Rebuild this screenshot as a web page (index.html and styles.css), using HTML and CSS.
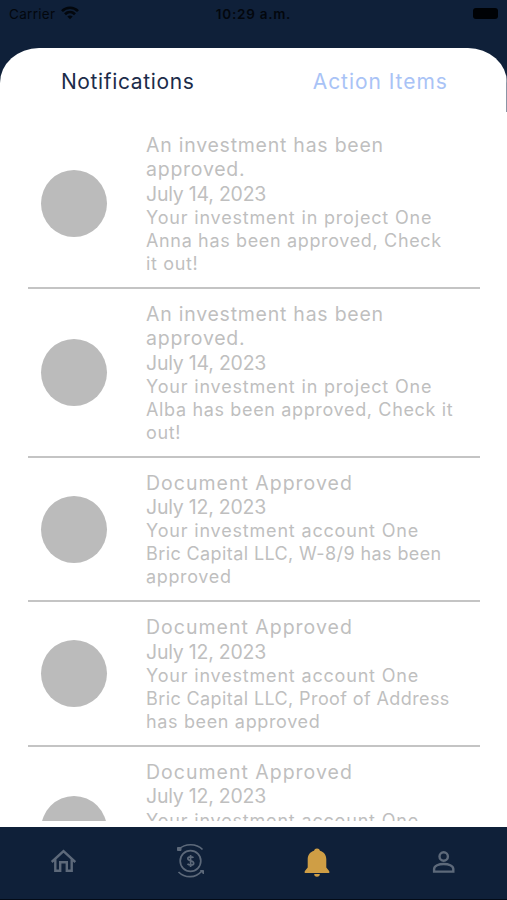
FILE: index.html
```html
<!DOCTYPE html>
<html lang="en">
<head>
<meta charset="utf-8">
<title>Notifications</title>
<link rel="stylesheet" href="styles.css">
</head>
<body>
<div class="app">
  <header class="status">
    <div class="carrier"><span>Carrier</span>
      <svg width="18" height="14" viewBox="0 0 18 14" fill="none" stroke="#03070d" stroke-width="2.7"><path d="M1 5.1C5.6.6 12.4.6 17 5.1M4 8.3c2.9-2.8 7.1-2.8 10 0"/><path d="M9 13.2 6.3 10.6c1.5-1.4 3.9-1.4 5.4 0z" fill="#03070d" stroke="none"/></svg>
    </div>
    <time>10:29 a.m.</time>
    <div class="power"><span class="battery"></span></div>
  </header>
  <main class="panel">
    <nav class="tabs"><span class="tab active">Notifications</span><span class="tab">Action Items</span></nav>
    <div class="list">
      <article class="item"><i class="avatar"></i><div class="text">
        <h2>An investment has been<br>approved.</h2><h2 class="date">July 14, 2023</h2>
        <p><span class="wide">Your investment in project One</span><br>Anna has been approved, Check<br>it out!</p></div></article>
      <article class="item"><i class="avatar"></i><div class="text">
        <h2>An investment has been<br>approved.</h2><h2 class="date">July 14, 2023</h2>
        <p><span class="wide">Your investment in project One</span><br>Alba has been approved, Check it<br>out!</p></div></article>
      <article class="item"><i class="avatar"></i><div class="text">
        <h2 class="doc">Document Approved</h2><h2 class="date">July 12, 2023</h2>
        <p><span class="wide">Your investment account One</span><br><span class="narrow">Bric Capital LLC, W-8/9 has been</span><br>approved</p></div></article>
      <article class="item"><i class="avatar"></i><div class="text">
        <h2 class="doc">Document Approved</h2><h2 class="date">July 12, 2023</h2>
        <p><span class="wide">Your investment account One</span><br><span class="narrow">Bric Capital LLC, Proof of Address</span><br>has been approved</p></div></article>
      <article class="item last"><i class="avatar"></i><div class="text">
        <h2 class="doc">Document Approved</h2><h2 class="date">July 12, 2023</h2>
        <p><span class="wide">Your investment account One</span></p></div></article>
    </div>
  </main>
  <footer class="bar">
    <a><svg width="26" height="34" viewBox="0 0 26 34" fill="none" stroke="#5d697a" stroke-width="2.4"><path d="M1.700 18 13.500 7.200l11.800 10.800M5.300 15.500v11.200h4.900v-8.500h6.600v8.500h4.900V15.500"/></svg></a>
    <a><svg width="30" height="36" viewBox="0 0 30 36" fill="none" stroke="#5d697a" stroke-width="1.7"><circle cx="15.500" cy="18" r="10.3"/><path d="M4 6.200C10 .2 21.300.2 27.500 6.500"/><path d="M3.500 29c6.500 6.300 17 6.500 23-.8"/><path d="M2.500 4.500H6v3H2.500zM25.500 27.500h3v3.500z" fill="#5d697a" stroke-width="1"/><path d="M18.500 14.800c-1-1.300-5.700-1.600-5.700.8 0 2.700 5.900 1.700 5.900 4.600 0 2.600-5 2.300-6.200.5M15.600 12v12"/></svg></a>
    <a><svg width="26" height="34" viewBox="0 0 26 34" fill="#cf9e45"><path d="M13 4.500a3 3 0 0 1 3 2.300c3.800 1.300 6.300 4.200 6.300 8.400v8.400l3 3.600v1.900H.7v-1.900l3-3.600v-8.400C3.700 11 6.200 8.100 10 6.800a3 3 0 0 1 3-2.300zM10.200 30h5.600a2.800 2.800 0 0 1-5.600 0z"/></svg></a>
    <a><svg width="26" height="34" viewBox="0 0 26 34" fill="none" stroke="#5d697a" stroke-width="2.4"><circle cx="12.700" cy="12.500" r="4.200"/><path d="M3.100 27.600v-2.500c0-6.800 19.200-6.800 19.200 0v2.500z"/></svg></a>
  </footer>
</div>
</body>
</html>
```
FILE: styles.css
```css
* { box-sizing: border-box; }
body { margin: 0; background: #0f2039; font-family: Inter, "Liberation Sans", sans-serif; }
.app { height: 900px; display: flex; flex-direction: column; overflow: hidden; background: #0f2039; }
.status { height: 47.5px; flex: none; display: grid; grid-template-columns: 1fr auto 1fr; align-items: start; padding: 5px 9px 0 9px; color: #03070d; font-size: 13.5px; line-height: 18px; }
.carrier { display: flex; gap: 6px; letter-spacing: .3px; }
.carrier svg { margin-top: 1px; }
.status time { font-weight: 600; letter-spacing: .75px; }
.power { display: flex; justify-content: flex-end; padding-top: 3px; }
.battery { width: 25px; height: 11px; border-radius: 3px; background: #000205; }
.panel { height: 779px; flex: none; padding-bottom: 6px; display: flex; flex-direction: column; background: #fff; border-radius: 39px 39px 0 0 / 35px 35px 0 0; overflow: hidden; }
.tabs { height: 72.3px; flex: none; display: grid; grid-template-columns: 1fr 1fr; padding-top: 20px; text-align: center; font-size: 21px; line-height: 27px; background: linear-gradient(#8b95a5, #8b95a5) right top / 1px 64px no-repeat; }
.tab { color: #a9c3f6; letter-spacing: .95px; }
.tab.active { color: #1c2c4a; letter-spacing: .65px; padding-left: 2px; }
.list { flex: 1; min-height: 0; overflow: hidden; padding: 0 27px 0 27.5px; }
.item { display: flex; align-items: center; padding: 13px 0 12px 13px; border-bottom: 2px solid #c4c4c4; }
.item.last { height: 167.3px; }
.item.last .text { align-self: flex-start; }
.avatar { width: 66px; height: 67px; flex: none; border-radius: 50%; background: #bbb; }
.text { margin-left: 39.5px; color: #bfbfbf; white-space: nowrap; }
h2 { margin: 0; font-size: 19.5px; line-height: 24.4px; font-weight: 400; letter-spacing: .75px; }
.doc { letter-spacing: 1px; }
.date { letter-spacing: -.22px; }
p { margin: 0; padding-top: 1px; margin-bottom: -1px; font-size: 18px; line-height: 22.9px; letter-spacing: .65px; }
.wide { letter-spacing: .82px; }
.narrow { letter-spacing: .4px; }
.bar { flex: 1; display: grid; grid-template-columns: repeat(4, 1fr); justify-items: center; padding-top: 17px; border-bottom: 1px solid #030b17; }
.bar a { height: 34px; display: flex; align-items: center; }
```
